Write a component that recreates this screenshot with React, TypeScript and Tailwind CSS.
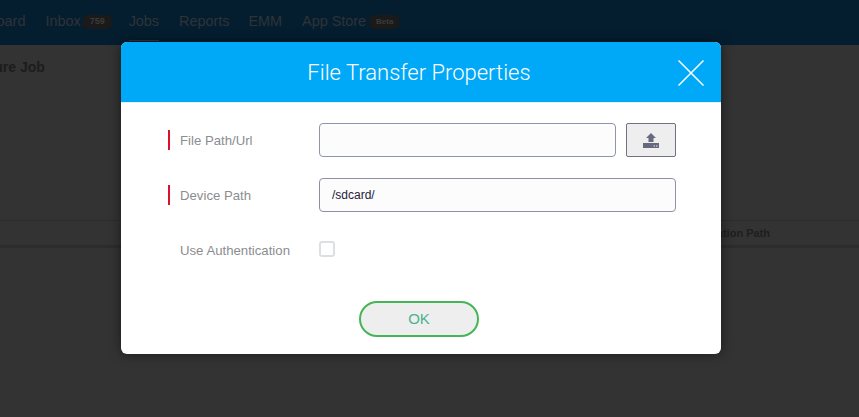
function UploadIcon() {
  return (
    <svg width="16" height="15" viewBox="0 0 16 15" fill="#666a7c">
      <path d="M8 0L13 5H10.5V9H5.5V5H3Z" />
      <path d="M0 10H16V15H0Z" />
      <rect x="10.5" y="12.5" width="1.5" height="1" fill="#e8e8ee" />
      <rect x="13" y="12.5" width="1.5" height="1" fill="#e8e8ee" />
    </svg>
  )
}

function CloseIcon() {
  return (
    <svg className="absolute right-[17px] top-[18px]" width="26" height="26" viewBox="0 0 26 26" stroke="#ffffff" strokeWidth="1.5" fill="none">
      <path d="M0.5 0.5L25.5 25.5M25.5 0.5L0.5 25.5" />
    </svg>
  )
}

function FieldLabel({ text, required }: { text: string; required?: boolean }) {
  return (
    <div className="flex items-center w-[151px] h-5 shrink-0">
      <div className={required ? "w-[2px] h-5 bg-[#d9122e]" : "w-[2px] h-5"} />
      <span className="ml-[10px] pt-[2px] text-[13.2px] text-[#8a8d90]">{text}</span>
    </div>
  )
}

export default function App() {
  return (
    <div className="relative w-[859px] h-[417px] overflow-hidden bg-[#333333] font-['Liberation_Sans',sans-serif]">
      {/* dimmed page behind */}
      <header className="flex items-center h-[45px] bg-[#041e30] text-[14.4px] text-[#2f3336]">
        <div className="flex items-center -ml-[45px] -mt-[1px]">
          <span>Dashboard</span>
          <span className="ml-5">Inbox</span>
          <span className="ml-[1px] px-2 h-[14px] rounded-full bg-[#1a1a1a] text-[9px] leading-[13px] text-[#3a3a3a] font-bold">759</span>
          <span className="relative ml-[16px]">
            Jobs
            <span className="absolute left-0 right-0 -bottom-[8px] h-px bg-[#30393f]" />
          </span>
          <span className="ml-5">Reports</span>
          <span className="ml-[19px]">EMM</span>
          <span className="ml-5">App Store</span>
          <span className="ml-[3px] px-[7px] h-[14px] rounded-full bg-[#1a1a1a] text-[8px] leading-[13px] text-[#3a3a3a] font-bold">Beta</span>
        </div>
      </header>
      <div className="h-[175px] pt-[12px]">
        <h1 className="-ml-[50px] text-[14px] font-bold text-[#1c1c1c]">Configure Job</h1>
      </div>
      <div className="flex items-center justify-end h-[28px] border-t border-b-[3px] border-[#2c2c2c] pr-[89px] text-[11px] font-bold text-[#1e1e1e]">
        Destination Path
      </div>

      {/* modal */}
      <div className="absolute left-[121px] top-[42px] w-[600px] h-[312px] rounded-[6px] overflow-hidden bg-white shadow-[0_0_12px_rgba(0,0,0,0.5)] flex flex-col">
        <div className="relative flex items-center justify-center h-[61px] shrink-0 bg-[#00a8f8] border-b border-[#dff2fc] pr-[4px] pt-[1px]">
          <span className="font-['Roboto',sans-serif] font-light text-[22px] text-white">File Transfer Properties</span>
          <CloseIcon />
        </div>

        <div className="flex flex-col pl-[47px] pt-[20px] pr-[45px]">
          <div className="flex items-center h-[34px]">
            <FieldLabel text="File Path/Url" required />
            <div className="w-[297px] h-[34px] rounded-[4px] border border-[#8f95ab] bg-[#fcfcfc]" />
            <button className="ml-[10px] flex items-center justify-center w-[50px] h-[34px] rounded-[2px] border border-[#6f7280] bg-[#eeeeee]">
              <UploadIcon />
            </button>
          </div>
          <div className="flex items-center h-[34px] mt-[21px]">
            <FieldLabel text="Device Path" required />
            <div className="flex items-center w-[357px] h-[34px] px-3 rounded-[4px] border border-[#8c91a6] bg-[#fcfcfc] text-[12px] text-[#22223a]">
              /sdcard/
            </div>
          </div>
          <div className="flex items-center h-[16px] mt-[30px]">
            <FieldLabel text="Use Authentication" />
            <div className="w-4 h-4 mb-[2px] rounded-[3px] border-2 border-[#dddfe3] bg-white" />
          </div>
        </div>

        <div className="flex justify-center mt-[43px] pr-[4px]">
          <button className="w-[120px] h-[36px] rounded-full border-[2px] border-[#45b556] bg-[#eeeeee] text-[15px] text-[#4cb38c]">
            OK
          </button>
        </div>
      </div>
    </div>
  )
}
